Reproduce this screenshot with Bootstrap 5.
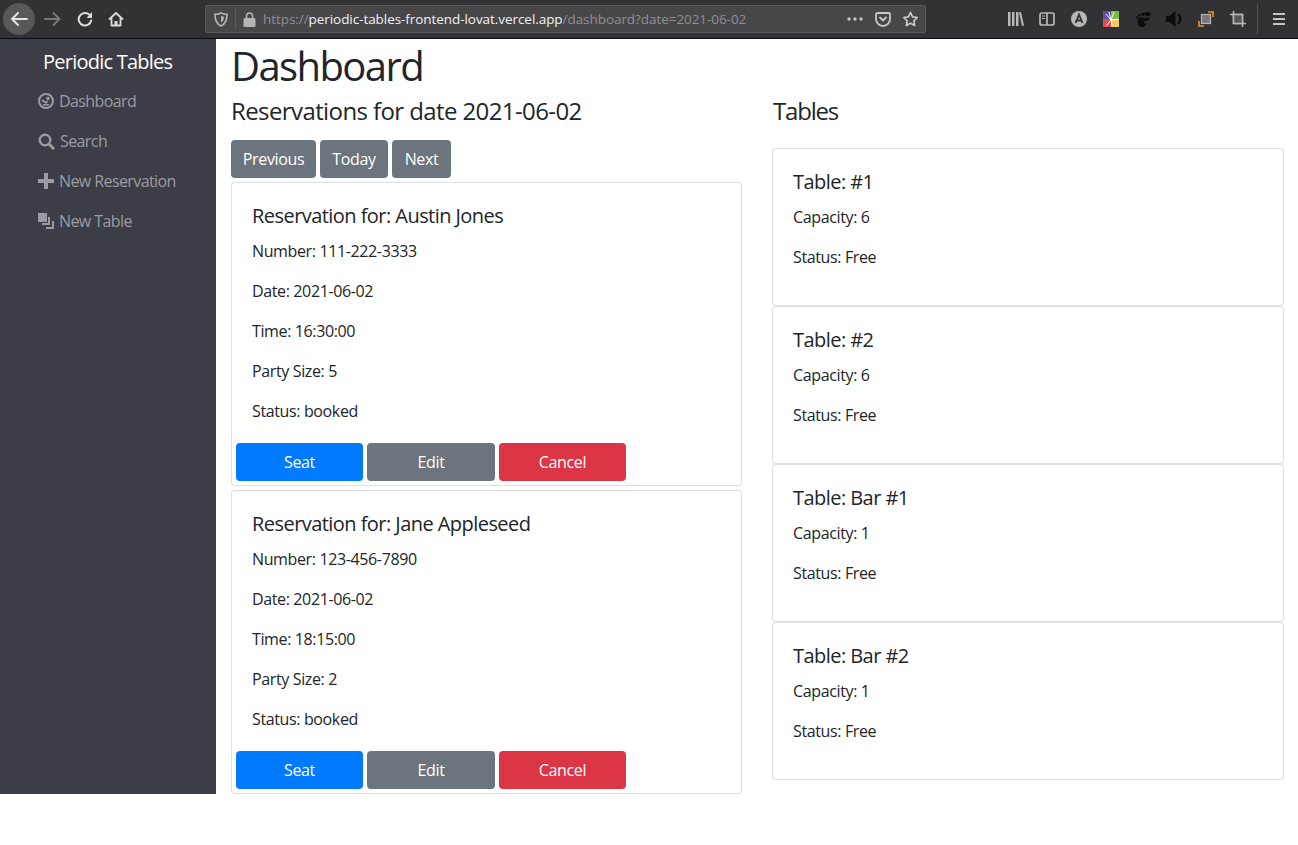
<!DOCTYPE html>
<html lang="en">
<head>
<meta charset="utf-8">
<title>Periodic Tables</title>
<link href="https://cdn.jsdelivr.net/npm/bootstrap@5.3.0/dist/css/bootstrap.min.css" rel="stylesheet">
<style>
body{font-family:"Open Sans","Noto Sans",sans-serif;color:#212529;background:#fff;font-size:16px;letter-spacing:-.023em}
.chrome{height:39px;background:#323234;border-bottom:1px solid #0c0c0d;flex:none;letter-spacing:0}
.chrome svg{display:block;flex:none}
.tb-btn{width:32px;height:32px;border-radius:50%}
.tb-back{background:#58585a;margin-left:3px}
.urlbar{width:721px;height:28px;margin-left:81px;background:#47474a;border:1px solid #5a5a5d;border-radius:2px;font-size:13.5px;color:#8f8f92;white-space:nowrap}
.urlbar b{font-weight:400;color:#f2f2f3}
.url-sep{width:1px;height:22px;background:#5c5c5f;margin:0 7px}
.url-text{width:570px;letter-spacing:-.06px;margin-left:7px}
.tools{margin-left:auto;width:372px}
.tool-sep{width:1px;height:30px;background:#555558;margin-left:11px}
.shell{height:755px}
.sidenav{width:216px;background:#3c3d47;flex:none}
.brand-title{font-size:20px;line-height:27px;color:#fff;padding:9px 0 0 43px;margin-bottom:6px;letter-spacing:-.038em}
.side-link{height:40px;padding-left:38px;color:#9b9ca2;font-size:16px;text-decoration:none;letter-spacing:-.037em}
.side-link:hover{color:#9b9ca2}
.side-link svg{flex:none;margin-right:5px}
.main-pane{padding:3px 14px 0 15px;min-width:0}
.page-title{font-size:40px;line-height:48px;font-weight:400;margin:0 0 7px;letter-spacing:-.04em}
.sub-title{font-size:24px;line-height:28px;font-weight:400;margin:0;letter-spacing:-.025em}
.col-left{width:511px}
.col-right{width:512px;margin-left:30px}
.col-right .sub-title{padding-left:1px;letter-spacing:-.05em}
.day-btns{margin-top:15px;margin-bottom:4px}
.btn-flat{height:38px;border:0;border-radius:4px;font-size:16px;line-height:38px;padding:0;color:#fff;letter-spacing:inherit}
.btn-flat:hover,.btn-flat:active{color:#fff}
.tone-gray,.tone-gray:hover{background:#6c757d}
.tone-blue,.tone-blue:hover{background:#007bff}
.tone-red,.tone-red:hover{background:#dc3545}
.w-prev{width:85px}.w-today{width:68px}.w-next{width:59px}
.w-seat{width:127px}.w-edit{width:128px}.w-cancel{width:127px}
.res-card,.tbl-card{border-color:rgba(0,0,0,.125);border-radius:4px}
.res-card{height:304px;margin-bottom:4px}
.res-card:last-child{margin-bottom:0}
.res-body{padding:21px 20px 0}
.tbl-list{margin-top:23px}
.tbl-card{height:158px}
.card-head{font-size:20px;line-height:24px;font-weight:400;margin:0 0 11px;letter-spacing:-.0275em}
.res-body p{margin:0 0 16px;line-height:24px}
.res-actions{padding-left:4px;position:absolute;top:260px;left:0}
</style>
</head>
<body>
<div class="chrome d-flex align-items-center">
  <div class="tb-btn tb-back d-flex align-items-center justify-content-center">
    <svg width="18" height="16" viewBox="0 0 18 16" fill="none" stroke="#e4e4e5" stroke-width="2" stroke-linecap="round" stroke-linejoin="round"><path d="M17 8H2M8 2 2 8l6 6"/></svg>
  </div>
  <svg style="margin-left:9px" width="17" height="16" viewBox="0 0 17 16" fill="none" stroke="#77777a" stroke-width="2" stroke-linecap="round" stroke-linejoin="round"><path d="M1 8h14M9.500 2l6 6-6 6"/></svg>
  <svg style="margin-left:16px" width="16" height="16" viewBox="0 0 16 16" fill="none" stroke="#dcdcdd" stroke-width="2" stroke-linecap="round"><path d="M14.200 9.500A6.300 6.300 0 1 1 11.500 3L13.500 4.500"/><path d="M15 1v6H9.500Z" fill="#dcdcdd" stroke="none"/></svg>
  <svg style="margin-left:15px" width="16" height="16" viewBox="0 0 16 16" fill="none" stroke="#dcdcdd" stroke-width="1.800" stroke-linejoin="round"><path d="M1 8.500 8 2l7 6.500M3.500 7v7.500h9V7"/><path d="M6.500 14.500v-4.500h3v4.500" fill="#dcdcdd" stroke="none"/></svg>
  <div class="urlbar d-flex align-items-center">
    <svg style="margin-left:8px" width="14" height="15" viewBox="0 0 14 15" fill="none" stroke="#b4b4b6" stroke-width="1.700"><path d="M7 1c2 1 4 1.300 6 1.300 0 6-1.500 9.700-6 11.700C2.500 12 1 8.300 1 2.300 3 2.300 5 2 7 1Z"/><path d="M7 4c1 .4 2 .6 3 .6 0 3-1 5-3 6Z" fill="#b4b4b6" stroke="none"/></svg>
    <span class="url-sep"></span>
    <svg width="13" height="15" viewBox="0 0 13 15" fill="#b4b4b6"><path d="M2 6h9a1.500 1.500 0 0 1 1.500 1.500v6A1.500 1.500 0 0 1 11 15H2a1.500 1.500 0 0 1-1.500-1.500v-6A1.500 1.500 0 0 1 2 6Z"/><path d="M3.500 6.500V4a3 3 0 0 1 6 0v2.500" fill="none" stroke="#b4b4b6" stroke-width="1.600"/></svg>
    <span class="url-text">https://<b>periodic-tables-frontend-lovat.vercel.app</b>/dashboard?date=2021-06-02</span>
    <svg class="ms-auto" width="16" height="4" viewBox="0 0 16 4" fill="#c4c4c6"><circle cx="2" cy="2" r="1.700"/><circle cx="8" cy="2" r="1.700"/><circle cx="14" cy="2" r="1.700"/></svg>
    <svg style="margin-left:12px" width="16" height="15" viewBox="0 0 16 15" fill="none" stroke="#c8c8ca" stroke-width="1.800" stroke-linecap="round" stroke-linejoin="round"><path d="M2.500 1h11A1.500 1.500 0 0 1 15 2.500V7a7 7 0 0 1-14 0V2.500A1.500 1.500 0 0 1 2.500 1Z"/><path d="M5 5.500 8 8.500l3-3"/></svg>
    <svg style="margin:0 6px 0 11px" width="17" height="16" viewBox="0 0 17 16" fill="none" stroke="#c8c8ca" stroke-width="1.700" stroke-linejoin="round"><path d="m8.500 1.500 2.100 4.300 4.700.7-3.400 3.300.8 4.700-4.200-2.200-4.200 2.200.8-4.700L1.700 6.500l4.700-.7Z"/></svg>
  </div>
  <div class="tools d-flex align-items-center">
    <svg style="margin-left:82px" width="16" height="14" viewBox="0 0 16 14" fill="#b8b8ba"><rect x="0" y="0" width="2.500" height="14"/><rect x="4" y="0" width="2.500" height="14"/><rect x="8" y="0" width="2.500" height="14"/><path d="m11 .5 2-.5 3 13.500-2 .5Z"/></svg>
    <svg style="margin-left:15px" width="16" height="14" viewBox="0 0 16 14" fill="none" stroke="#b8b8ba" stroke-width="1.700"><rect x="1" y="1" width="14" height="12" rx="2"/><path d="M8 1v12" /><path d="M3 4h3M3 6.500h3" stroke-width="1"/></svg>
    <svg style="margin-left:16px" width="16" height="16" viewBox="0 0 16 16"><circle cx="8" cy="8" r="8" fill="#b8b8ba"/><path d="M4.500 12 8 3.500l3.500 8.500M6 9.500h4" fill="none" stroke="#323234" stroke-width="1.800"/></svg>
    <svg style="margin-left:16px" width="16" height="16" viewBox="0 0 16 16"><rect width="8" height="8" fill="#5f4fa8"/><rect x="8" width="8" height="8" fill="#7cbb3d"/><rect y="8" width="8" height="8" fill="#e8484f"/><rect x="8" y="8" width="8" height="8" fill="#f2cc63"/><path d="M8 9 3 3M8 9l3-8M8 9l-5 6M8 9l7-1M8 9l1 6M8 9 6 1" stroke="#fff" stroke-width="1"/></svg>
    <svg style="margin-left:17px" width="15" height="15" viewBox="0 0 15 15" fill="#0c0c0d"><path d="M1.500 9C1.500 5.500 4 5 6.500 5.500 8.500 6 11 6 13.500 5c0 3-1.500 4-4 4C8 9 7.500 10 8 11c.5.8 1.800.6 2.500 0 0 2.500-2.500 4-5 4S1.500 12 1.500 9Z"/><ellipse cx="11.500" cy="2" rx="3.200" ry="2"/><ellipse cx="6.800" cy="2.300" rx="1.500" ry="1.900"/><ellipse cx="3.300" cy="3.200" rx="1.200" ry="1.500"/><ellipse cx="1" cy="5.500" rx="1" ry="1.200"/></svg>
    <svg style="margin-left:15px" width="17" height="16" viewBox="0 0 17 16" fill="#0c0c0d"><path d="M0 5h3.500L9.500 0v16l-6-5H0Z"/><path d="M12 3a6.500 6.500 0 0 1 0 10" fill="none" stroke="#0c0c0d" stroke-width="2.200"/></svg>
    <svg style="margin-left:15px" width="16" height="16" viewBox="0 0 16 16" fill="none"><path d="M10 1h5v5M1 10v5h5" stroke="#d79a17" stroke-width="1.700"/><rect x="3.500" y="3.500" width="9" height="9" fill="#77777a" stroke="#b8b8ba" stroke-width="1.200"/></svg>
    <svg style="margin-left:16px" width="16" height="16" viewBox="0 0 16 16" fill="none" stroke="#b8b8ba" stroke-width="1.500"><path d="M3.500 0v12.500H16M0 3.500h12.500V16"/><rect x="3.500" y="3.500" width="9" height="9" fill="#58585a"/></svg>
    <span class="tool-sep"></span>
    <svg style="margin-left:15px" width="12" height="12" viewBox="0 0 12 12" fill="#c4c4c6"><rect width="12" height="2"/><rect y="5" width="12" height="2"/><rect y="10" width="12" height="2"/></svg>
  </div>
</div>

<div class="shell d-flex">
  <nav class="sidenav d-flex flex-column">
    <div class="brand-title">Periodic Tables</div>
    <a class="side-link d-flex align-items-center" href="#">
      <svg width="16" height="16" viewBox="0 0 16 16" fill="none" stroke="#9b9ca2"><circle cx="8" cy="8" r="7" stroke-width="2"/><circle cx="10" cy="5.500" r="1.700" fill="#9b9ca2" stroke="none"/><path d="M4 7 8 9.800 9.500 8" stroke-width="1.800"/><path d="M5 11.800h6" stroke-width="1.500"/></svg>Dashboard</a>
    <a class="side-link d-flex align-items-center" href="#">
      <svg width="17" height="17" viewBox="0 0 17 17" fill="none" stroke="#9b9ca2"><circle cx="7" cy="7" r="5.300" stroke-width="2.400"/><path d="m11 11 5 5" stroke-width="3"/></svg>Search</a>
    <a class="side-link d-flex align-items-center" href="#">
      <svg width="16" height="16" viewBox="0 0 16 16" fill="#9b9ca2"><path d="M6 0h4v6h6v4h-6v6H6v-6H0V6h6Z"/></svg>New Reservation</a>
    <a class="side-link d-flex align-items-center" href="#">
      <svg width="16" height="16" viewBox="0 0 16 16" fill="#9b9ca2"><rect width="9" height="9"/><path d="M10 4h2v8H4v-2h6ZM14 8h2v8H8v-2h6Z"/></svg>New Table</a>
  </nav>
  <main class="main-pane flex-grow-1">
    <h1 class="page-title">Dashboard</h1>
    <div class="d-flex">
      <div class="col-left">
        <h4 class="sub-title">Reservations for date 2021-06-02</h4>
        <div class="day-btns d-flex gap-1">
          <button class="btn btn-flat tone-gray w-prev">Previous</button>
          <button class="btn btn-flat tone-gray w-today">Today</button>
          <button class="btn btn-flat tone-gray w-next">Next</button>
        </div>
        <div class="card res-card position-relative">
          <div class="res-body">
            <h5 class="card-head">Reservation for: Austin Jones</h5>
            <p>Number: 111-222-3333</p><p>Date: 2021-06-02</p><p>Time: 16:30:00</p><p>Party Size: 5</p><p>Status: booked</p>
          </div>
          <div class="res-actions d-flex gap-1">
            <a class="btn btn-flat tone-blue w-seat" href="#">Seat</a>
            <a class="btn btn-flat tone-gray w-edit" href="#">Edit</a>
            <button class="btn btn-flat tone-red w-cancel">Cancel</button>
          </div>
        </div>
        <div class="card res-card position-relative">
          <div class="res-body">
            <h5 class="card-head">Reservation for: Jane Appleseed</h5>
            <p>Number: 123-456-7890</p><p>Date: 2021-06-02</p><p>Time: 18:15:00</p><p>Party Size: 2</p><p>Status: booked</p>
          </div>
          <div class="res-actions d-flex gap-1">
            <a class="btn btn-flat tone-blue w-seat" href="#">Seat</a>
            <a class="btn btn-flat tone-gray w-edit" href="#">Edit</a>
            <button class="btn btn-flat tone-red w-cancel">Cancel</button>
          </div>
        </div>
      </div>
      <div class="col-right">
        <h4 class="sub-title">Tables</h4>
        <div class="tbl-list">
          <div class="card tbl-card"><div class="res-body"><h5 class="card-head">Table: #1</h5><p>Capacity: 6</p><p>Status: Free</p></div></div>
          <div class="card tbl-card"><div class="res-body"><h5 class="card-head">Table: #2</h5><p>Capacity: 6</p><p>Status: Free</p></div></div>
          <div class="card tbl-card"><div class="res-body"><h5 class="card-head">Table: Bar #1</h5><p>Capacity: 1</p><p>Status: Free</p></div></div>
          <div class="card tbl-card"><div class="res-body"><h5 class="card-head">Table: Bar #2</h5><p>Capacity: 1</p><p>Status: Free</p></div></div>
        </div>
      </div>
    </div>
  </main>
</div>
<script src="https://cdn.jsdelivr.net/npm/bootstrap@5.3.0/dist/js/bootstrap.bundle.min.js"></script>
</body>
</html>
